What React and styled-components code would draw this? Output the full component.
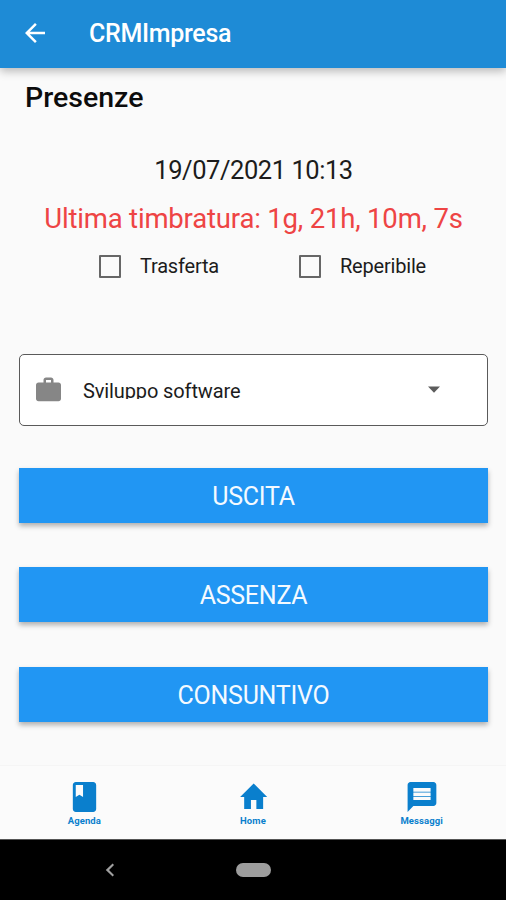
import React from 'react';
import styled, { createGlobalStyle } from 'styled-components';

const GlobalStyle = createGlobalStyle`
  * {
    box-sizing: border-box;
  }
  body {
    margin: 0;
    background: #fafafa;
    font-family: Roboto, 'Liberation Sans', sans-serif;
    color: #1c1c1c;
  }
`;

const Screen = styled.div`
  width: 506px;
  height: 900px;
  display: flex;
  flex-direction: column;
  overflow: hidden;
  background: #fafafa;
`;

const AppBar = styled.header`
  flex: none;
  height: 68px;
  padding: 0 20px;
  display: flex;
  align-items: center;
  gap: 39px;
  background: #1e8bd6;
  color: #fff;
  box-shadow: 0 3px 9px rgba(0, 0, 0, 0.28);

  h1 {
    margin: 0;
    font-size: 25px;
    font-weight: 500;
    line-height: 30px;
    letter-spacing: -0.3px;
  }
`;

const IconButton = styled.button`
  padding: 0;
  border: 0;
  background: none;
  color: inherit;
  display: flex;
  margin-top: -3px;
`;

const Icon = styled.svg`
  display: block;
  flex: none;
  width: ${(props) => props.$width}px;
  height: ${(props) => props.$height || props.$width}px;
  fill: currentColor;
`;

const Content = styled.main`
  flex: 1;
  display: flex;
  flex-direction: column;
  padding: 12px 18px 0 19px;
`;

const PageTitle = styled.h2`
  margin: 0 0 0 6px;
  font-size: 28.5px;
  font-weight: 500;
  line-height: 36px;
  color: #0c0c0c;
`;

const Timestamp = styled.p`
  margin: 36px 0 0;
  font-size: 25.5px;
  line-height: 36px;
  letter-spacing: -0.45px;
  text-align: center;
  white-space: nowrap;
`;

const LastStamp = styled.p`
  margin: 12px 0 0;
  font-size: 27.5px;
  line-height: 37px;
  letter-spacing: -0.18px;
  text-align: center;
  white-space: nowrap;
  color: #ee4444;
`;

const Options = styled.div`
  margin-top: 14px;
  padding-left: 80px;
  display: grid;
  grid-template-columns: 200px 1fr;
  height: 30px;
`;

const Option = styled.label`
  display: flex;
  align-items: center;
  gap: 19px;
  font-size: 20px;
  line-height: 30px;
  letter-spacing: -0.2px;
`;

const Box = styled.span`
  width: 22px;
  height: 23px;
  border: 2px solid #666;
  border-radius: 1px;
`;

const Select = styled.div`
  margin-top: 73px;
  height: 72px;
  flex: none;
  display: flex;
  align-items: center;
  padding: 0 38px 0 13px;
  border: 1px solid #5a5a5a;
  border-radius: 5px;
  background: #fff;
  color: #868686;
`;

const SelectValue = styled.span`
  flex: 1;
  height: 21px;
  margin: 0 0 3px 19px;
  overflow: hidden;
  font-size: 20px;
  line-height: 27px;
  letter-spacing: -0.12px;
  white-space: nowrap;
  color: #1c1c1c;
`;

const Caret = styled.span`
  margin-bottom: 3px;
  color: #5c5c5c;
`;

const Actions = styled.div`
  margin-top: 41.6px;
  display: flex;
  flex-direction: column;
  gap: 44.5px;
`;

const Button = styled.button`
  height: 55px;
  padding: 2px 0 0;
  border: 0;
  background: #2196f3;
  color: #f4faff;
  font-family: inherit;
  font-size: 25px;
  line-height: 53px;
  letter-spacing: -0.25px;
  box-shadow: 0 3px 5px rgba(0, 0, 0, 0.3);
`;

const TabBar = styled.nav`
  flex: none;
  height: 74px;
  display: grid;
  grid-template-columns: repeat(3, 1fr);
  border-top: 1px solid #f5f5f5;
  background: #fbfbfb;
`;

const Tab = styled.a`
  display: flex;
  flex-direction: column;
  align-items: center;
  padding-top: 13px;
  font-size: 9.5px;
  font-weight: 700;
  line-height: 12px;
  letter-spacing: 0.1px;
  color: #0a7fcd;
`;

const SystemBar = styled.footer`
  flex: none;
  height: 61px;
  display: grid;
  grid-template-columns: 219px 69px 1fr;
  align-items: center;
  justify-items: center;
  border-top: 1px solid #555;
  background: #000;
  color: #a0a0a0;
`;

const HomePill = styled.span`
  width: 35px;
  height: 14px;
  border-radius: 7px;
  background: #9d9d9d;
`;

const tabs = [
  {
    label: 'Agenda',
    width: 35,
    viewBox: '0 0 24 24',
    path: 'M18 2H6c-1.1 0-2 .9-2 2v16c0 1.1.9 2 2 2h12c1.1 0 2-.9 2-2V4c0-1.1-.9-2-2-2zM6 4h5v8l-2.5-1.5L6 12V4z',
  },
  {
    label: 'Home',
    width: 32.5,
    viewBox: '-0.3 0 24 24',
    path: 'M10 20v-6h4v6h5v-8h3L12 3 2 12h3v8z',
  },
  {
    label: 'Messaggi',
    width: 34.5,
    viewBox: '-0.5 0 24 24',
    path: 'M20 2H4c-1.1 0-1.99.9-1.99 2L2 22l4-4h14c1.1 0 2-.9 2-2V4c0-1.1-.9-2-2-2zm-2 12H6v-2h12v2zm0-2.5H6V9h12v2.5zm0-3H6V6h12v2.5z',
  },
];

export default function App() {
  return (
    <>
      <GlobalStyle />
      <Screen>
        <AppBar>
          <IconButton aria-label="Indietro">
            <Icon $width={30} viewBox="0 0 24 24">
              <path d="M20 11H7.83l5.59-5.59L12 4l-8 8 8 8 1.41-1.41L7.83 13H20v-2z" />
            </Icon>
          </IconButton>
          <h1>CRMImpresa</h1>
        </AppBar>
        <Content>
          <PageTitle>Presenze</PageTitle>
          <Timestamp>19/07/2021 10:13</Timestamp>
          <LastStamp>Ultima timbratura: 1g, 21h, 10m, 7s</LastStamp>
          <Options>
            <Option>
              <Box />
              Trasferta
            </Option>
            <Option>
              <Box />
              Reperibile
            </Option>
          </Options>
          <Select>
            <Icon $width={31} $height={30} viewBox="0 0 24 24">
              <path d="M20 6h-4V4c0-1.11-.89-2-2-2h-4c-1.11 0-2 .89-2 2v2H4c-1.11 0-1.99.89-1.99 2L2 19c0 1.11.89 2 2 2h16c1.11 0 2-.89 2-2V8c0-1.11-.89-2-2-2zm-6 0h-4V4h4v2z" />
            </Icon>
            <SelectValue>Sviluppo software</SelectValue>
            <Caret>
              <Icon $width={30} viewBox="0 0 24 24">
                <path d="M7.2 10l4.8 5 4.8-5z" />
              </Icon>
            </Caret>
          </Select>
          <Actions>
            <Button>USCITA</Button>
            <Button>ASSENZA</Button>
            <Button>CONSUNTIVO</Button>
          </Actions>
        </Content>
        <TabBar>
          {tabs.map(({ label, width, viewBox, path }) => (
            <Tab key={label}>
              <Icon $width={width} $height={36} viewBox={viewBox} preserveAspectRatio="none">
                <path d={path} />
              </Icon>
              {label}
            </Tab>
          ))}
        </TabBar>
        <SystemBar>
          <Icon $width={9} $height={14} viewBox="0 0 9 14">
            <path d="M7.6 0.4L9 2 4 7l5 5-1.4 1.6L0.8 7z" />
          </Icon>
          <HomePill />
        </SystemBar>
      </Screen>
    </>
  );
}
